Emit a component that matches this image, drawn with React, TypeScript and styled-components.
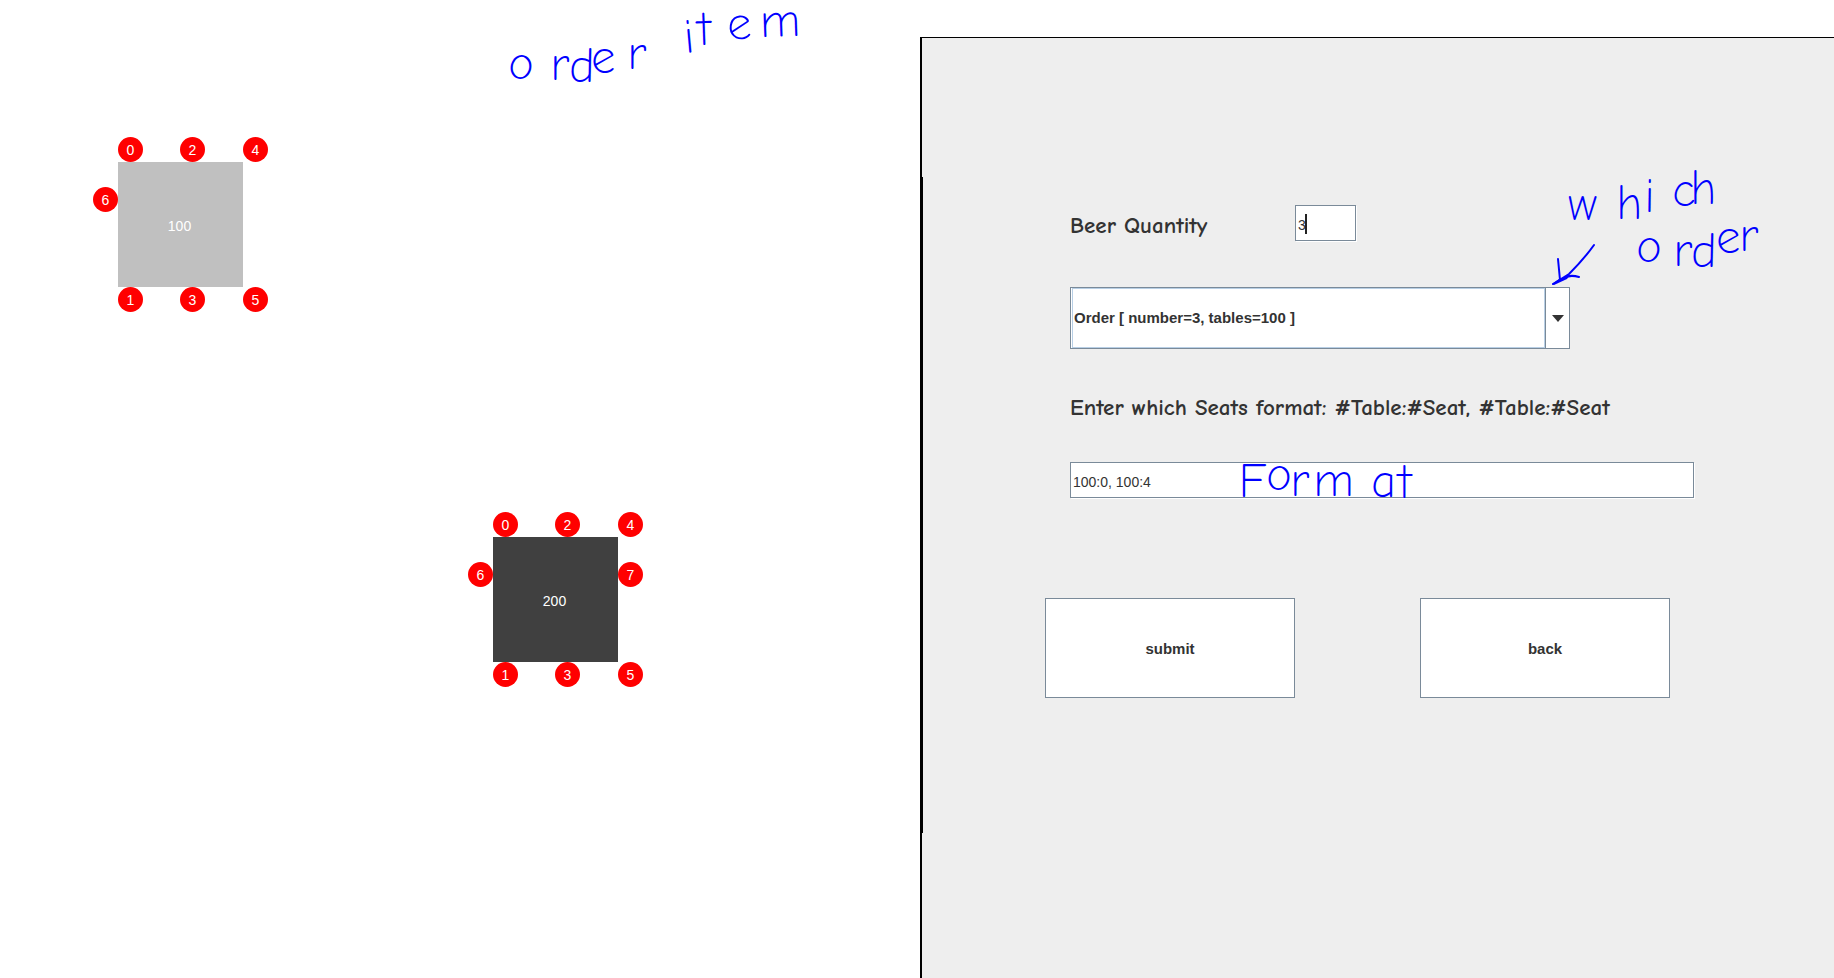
import React from "react";
import styled, { createGlobalStyle } from "styled-components";

const GlobalStyle = createGlobalStyle`
  *, *::before, *::after { box-sizing: border-box; }
  body {
    margin: 0;
    background: #fff;
    color: #333;
    font-family: "Liberation Sans", Arial, sans-serif;
  }
`;

const steel = "#7a8a99";
const paleBlue = "#b8cfe5";
const inkBlue = "#0000ff";

const Page = styled.div`
  display: grid;
  grid-template-columns: minmax(0, 920fr) minmax(0, 914fr);
  min-height: 100vh;
  overflow: hidden;
`;

const Floor = styled.main`
  position: relative;
`;

const TableBlock = styled.div<{ $x: number; $y: number; $color: string }>`
  position: absolute;
  left: ${(p) => p.$x}px;
  top: ${(p) => p.$y}px;
  width: 125px;
  height: 125px;
  display: flex;
  align-items: center;
  justify-content: center;
  padding: 2px 2px 0 0;
  background: ${(p) => p.$color};
  color: #fff;
  font-size: 14px;
  line-height: 20px;
`;

const Seat = styled.span<{ $x: number; $y: number }>`
  position: absolute;
  left: ${(p) => p.$x}px;
  top: ${(p) => p.$y}px;
  width: 25px;
  height: 25px;
  border-radius: 50%;
  background: #f00;
  text-align: center;
  line-height: 27px;
`;

const Panel = styled.section`
  display: flex;
  margin-top: 37px;
  border-top: 1px solid #000;
  border-left: 2px solid #000;
  background: #eee;
`;

const Divider = styled.div`
  width: 1px;
  margin: 139px 0 145px;
  background: #000;
`;

const Form = styled.form`
  flex: 1;
  min-width: 0;
  max-width: 771px;
  padding: 167px 0 40px 122px;
`;

const Fields = styled.div`
  display: flex;
  flex-direction: column;
  gap: 46px;
  padding-left: 25px;
`;

const QuantityRow = styled.div`
  display: grid;
  grid-template-columns: 225px 61px;
  align-items: center;
`;

const Label = styled.label`
  margin-bottom: -2px;
  padding-top: 2px;
  font-family: "Comic Sans MS", "Comic Neue", "Noto Sans", sans-serif;
  font-size: 23px;
  font-weight: 700;
  line-height: 21px;
  white-space: nowrap;
`;

const FieldWrap = styled.div`
  position: relative;
`;

const TextInput = styled.input`
  display: block;
  width: 100%;
  height: 36px;
  padding: 3px 2px 0;
  border: 1px solid ${steel};
  border-radius: 0;
  box-shadow: 1px 1px 0 #fff;
  background: #fff;
  color: #333;
  font: 14px "Liberation Sans", Arial, sans-serif;
  outline: none;
`;

const Caret = styled.span`
  position: absolute;
  left: 10px;
  top: 9px;
  width: 2px;
  height: 20px;
  background: #222;
`;

const Combo = styled.div`
  display: flex;
  width: 500px;
  height: 62px;
  padding-left: 1px;
  border: 1px solid ${steel};
  background: #fff;
`;

const Select = styled.select`
  flex: 1;
  min-width: 0;
  padding: 0 1px 2px;
  border: 1px solid ${paleBlue};
  border-radius: 0;
  appearance: none;
  background: #fff;
  color: #333;
  font: bold 15px "Liberation Sans", Arial, sans-serif;
  outline: none;
`;

const ComboArrow = styled.span`
  display: flex;
  align-items: center;
  justify-content: center;
  width: 24px;
  border-left: 1px solid ${steel};
`;

const Actions = styled.div`
  display: flex;
  gap: 125px;
  margin-top: 100px;
`;

const Button = styled.button`
  width: 250px;
  height: 100px;
  border: 1px solid ${steel};
  border-radius: 0;
  background: #fff;
  color: #333;
  font: bold 15px "Liberation Sans", Arial, sans-serif;
`;

const Note = styled.svg<{ $x: number; $y: number }>`
  position: absolute;
  left: ${(p) => p.$x}px;
  top: ${(p) => p.$y}px;
  overflow: visible;
  pointer-events: none;
  fill: ${inkBlue};
  font-family: "Comic Sans MS", "Comic Neue", "Open Sans", sans-serif;
  font-size: 48px;
  font-weight: 300;
`;

const seatSpots = [
  [0, -25],
  [0, 125],
  [62, -25],
  [62, 125],
  [125, -25],
  [125, 125],
  [-25, 25],
  [125, 25],
];

interface DiningTableProps {
  number: number;
  seats: number;
  x: number;
  y: number;
  color: string;
}

function DiningTable({ number, seats, x, y, color }: DiningTableProps) {
  return (
    <TableBlock $x={x} $y={y} $color={color}>
      {number}
      {seatSpots.slice(0, seats).map(([sx, sy], i) => (
        <Seat key={i} $x={sx} $y={sy}>
          {i}
        </Seat>
      ))}
    </TableBlock>
  );
}

export default function App() {
  return (
    <>
      <GlobalStyle />
      <Page>
        <Floor>
          <DiningTable number={100} seats={7} x={118} y={162} color="#c0c0c0" />
          <DiningTable number={200} seats={8} x={493} y={537} color="#404040" />
          <Note $x={500} $y={0} width="310" height="90">
            <text
              x="8 50 69 91 127 150 185 198 228 260"
              y="79 80 82 73 69 60 53 45 40 37"
              rotate="0 0 0 0 0 0 -6 -2 -4 -2"
            >
              order item
            </text>
          </Note>
        </Floor>
        <Panel>
          <Divider />
          <Form onSubmit={(e) => e.preventDefault()}>
            <Fields>
              <QuantityRow>
                <Label htmlFor="quantity">Beer Quantity</Label>
                <FieldWrap>
                  <TextInput id="quantity" defaultValue="3" />
                  <Caret />
                </FieldWrap>
              </QuantityRow>
              <FieldWrap>
                <Combo>
                  <Select aria-label="Order">
                    <option>Order [ number=3, tables=100 ]</option>
                  </Select>
                  <ComboArrow>
                    <svg width="12" height="7" viewBox="0 0 12 7" aria-hidden="true">
                      <path d="M0 0H12L6 7Z" fill="#333" />
                    </svg>
                  </ComboArrow>
                </Combo>
                <Note $x={480} $y={-137} width="210" height="140">
                  <text
                    x="18 66 94 122 140 165 86 123 141 166 189"
                    y="70 69 62 56 54 54 112 116 117 103 101"
                  >
                    which order
                  </text>
                  <path
                    d="M44 95Q34 109 19 124L3 134M8 109L10 130M29 127Q19 124 12 129"
                    fill="none"
                    stroke={inkBlue}
                    strokeWidth="2"
                    strokeLinecap="round"
                    strokeLinejoin="round"
                  />
                  <path d="M2 134L9 129L20 125L17 129L4 135Z" />
                </Note>
              </FieldWrap>
              <Label htmlFor="seats">
                Enter which Seats format: #Table:#Seat, #Table:#Seat
              </Label>
              <FieldWrap>
                <TextInput id="seats" defaultValue="100:0, 100:4" />
                <Note $x={170} $y={-2} width="190" height="42">
                  <text x="-2 26 50 73 131 158" y="37 30 36 36 37 38">
                    Format
                  </text>
                </Note>
              </FieldWrap>
            </Fields>
            <Actions>
              <Button type="submit">submit</Button>
              <Button type="button">back</Button>
            </Actions>
          </Form>
        </Panel>
      </Page>
    </>
  );
}
